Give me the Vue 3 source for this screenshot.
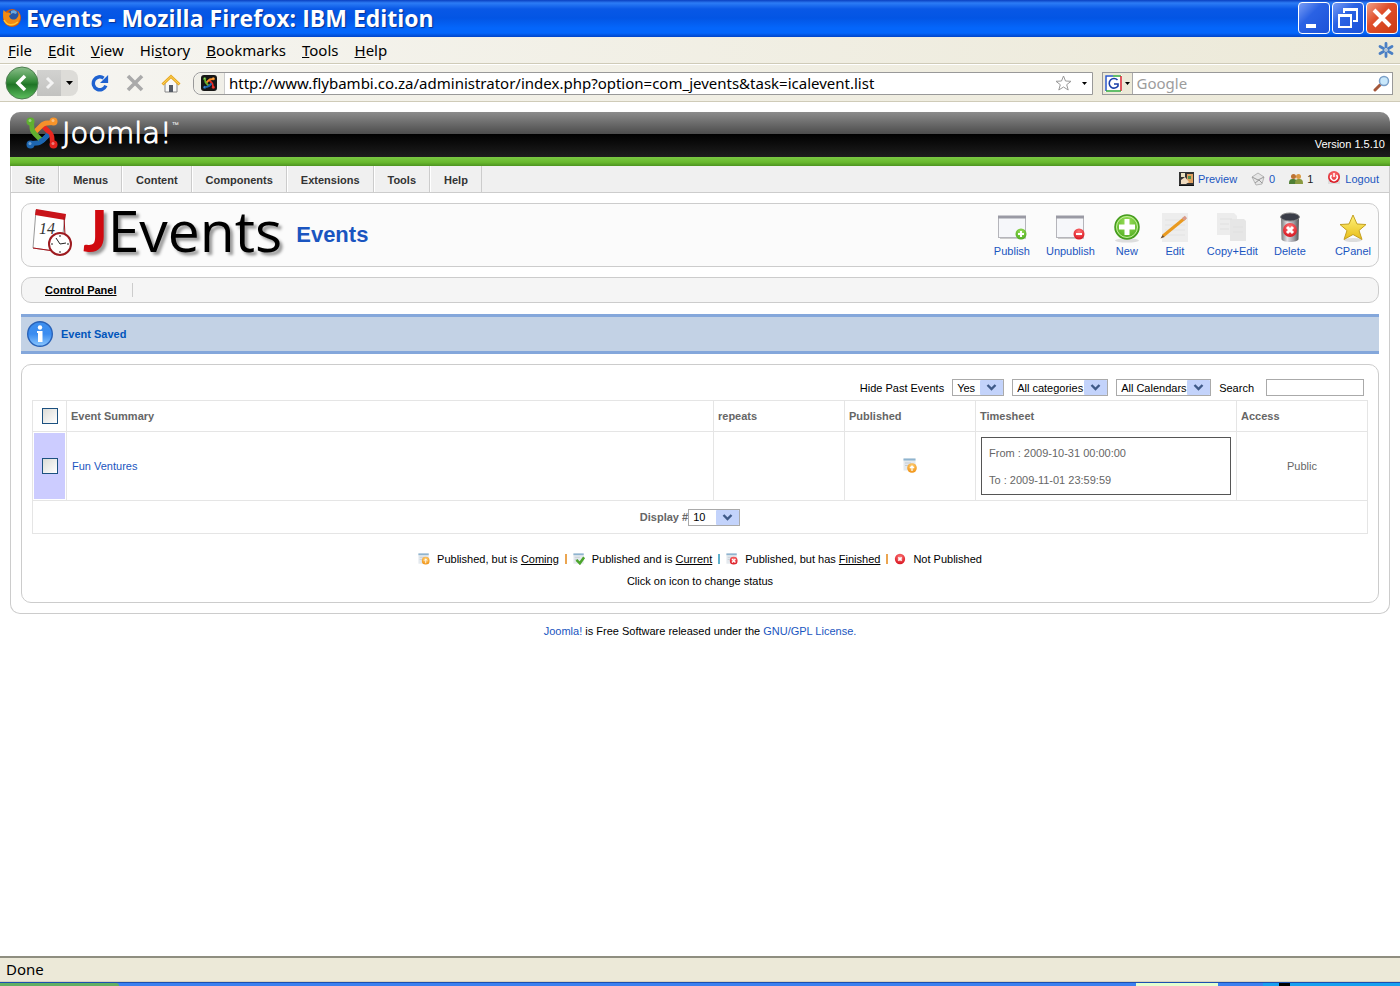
<template>
  <div class="window">
    <svg class="defs" width="0" height="0" aria-hidden="true">
      <defs>
        <radialGradient id="g-green" cx=".5" cy=".3" r=".7"><stop offset="0" stop-color="#9be05a" /><stop offset="1" stop-color="#4fac20" /></radialGradient>
        <radialGradient id="g-red" cx=".5" cy=".3" r=".7"><stop offset="0" stop-color="#f77" /><stop offset="1" stop-color="#d8141f" /></radialGradient>
        <radialGradient id="g-orange" cx=".5" cy=".3" r=".7"><stop offset="0" stop-color="#ffd27a" /><stop offset="1" stop-color="#f09010" /></radialGradient>
        <linearGradient id="g-blue" x2="0" y2="1"><stop offset="0" stop-color="#3d8fee" /><stop offset=".5" stop-color="#3a8cf0" /><stop offset="1" stop-color="#8cc8ff" /></linearGradient>
        <linearGradient id="g-back" x2="0" y2="1"><stop offset="0" stop-color="#8cc08c" /><stop offset=".45" stop-color="#358a3a" /><stop offset=".55" stop-color="#1f7526" /><stop offset="1" stop-color="#5fc060" /></linearGradient>
        <linearGradient id="g-can"><stop offset="0" stop-color="#777" /><stop offset=".35" stop-color="#e4e4e8" /><stop offset=".7" stop-color="#a0a0a6" /><stop offset="1" stop-color="#555" /></linearGradient>
        <linearGradient id="g-star" x2="0" y2="1"><stop offset="0" stop-color="#fff37a" /><stop offset="1" stop-color="#e8bd18" /></linearGradient>
        <symbol id="joomla" viewBox="0 0 32 32">
          <g fill="none" stroke-width="4.8" stroke-linecap="round" stroke-linejoin="round">
            <path d="M5 27c1-1 4-1 6-1 3 0 5-2 6-3l6-6" stroke="#1d66b0" />
            <path d="M27 27c-1-2-1-4-1-6 0-3-2-5-3-6l-5-5" stroke="#e8271f" />
            <path d="M27 5c-1 1-4 1-6 1-3 0-5 2-6 3l-5 5" stroke="#f7902a" />
            <path d="M5 5c1 2 1 4 1 6 0 3 2 5 3 6l6 6" stroke="#62b030" />
            <path d="M15 24l2-1 4-4" stroke="#1d66b0" />
          </g>
          <circle cx="4.500" cy="4.500" r="4" fill="#5fb030" /><circle cx="27.500" cy="4.500" r="4" fill="#f7942a" />
          <circle cx="27.500" cy="27.500" r="4" fill="#e2231d" /><circle cx="4.500" cy="27.500" r="4" fill="#1d66b0" />
          <g fill="#fff" opacity=".4"><circle cx="4" cy="3.500" r="1.500" /><circle cx="27" cy="3.500" r="1.500" /><circle cx="27" cy="26.500" r="1.500" /><circle cx="4" cy="26.500" r="1.500" /></g>
        </symbol>
        <symbol id="chevron" viewBox="0 0 23 15">
          <rect width="23" height="15" rx="1" fill="#c3d3fb" />
          <path d="M7.500 5l4 4 4-4" fill="none" stroke="#3f5a88" stroke-width="2.400" />
        </symbol>
        <symbol id="st-page" viewBox="0 0 14 14">
          <rect x=".5" y=".5" width="12" height="12" fill="#e4e9ee" /><path d="M.5 1.500h12" stroke="#8fb4cf" stroke-width="2" />
          <path d="M2 5h6M2 7.500h4" stroke="#c5ccd3" />
        </symbol>
      </defs>
    </svg>

    <header class="titlebar">
      <svg width="20" height="20" viewBox="0 0 20 20">
        <circle cx="10" cy="10" r="9" fill="#d85a08" />
        <circle cx="11" cy="8" r="6" fill="#2456a4" />
        <path d="M9 3c2-1 4-1 6 1l-1 2-3-1-2 1z" fill="#69a9df" />
        <path d="M1.500 2l3.500 3c2-1 3 0 4 1L7 8l1 2c2 2 5 2 7 0 2-2 2-5 1-7 3 4 3 10-1 13s-10 2-12-2C1 11 .500 6 1.500 2z" fill="#f28a14" />
        <path d="M2 12c3 6 9 6 14 2" fill="none" stroke="#ffc832" stroke-width="1.500" />
      </svg>
      <h1>Events - Mozilla Firefox: IBM Edition</h1>
      <div class="window-controls">
        <button aria-label="Minimize"><svg viewBox="0 0 28 28"><rect x="6" y="20" width="10" height="4" fill="#fff" /></svg></button>
        <button aria-label="Restore"><svg viewBox="0 0 28 28" fill="none" stroke="#fff"><path d="M10 9V5h13v12h-4" stroke-width="2" /><path d="M9 5.500h15" stroke-width="3" /><rect x="5" y="11" width="12" height="12" stroke-width="2" /><path d="M4 11.500h14" stroke-width="3" /></svg></button>
        <button class="close" aria-label="Close"><svg viewBox="0 0 28 28"><path d="M6 6l16 16M22 6L6 22" stroke="#fff" stroke-width="4" /></svg></button>
      </div>
    </header>

    <nav class="menubar">
      <button v-for="m in browserMenu" :key="m.key + m.rest">{{ m.pre }}<u>{{ m.key }}</u>{{ m.rest }}</button>
      <svg class="throbber" width="16" height="16" viewBox="0 0 16 16" stroke="#4a7fc4" stroke-width="2.800" stroke-linecap="round"><path d="M8 1.500v3.500M8 11v3.500M2 4.500l3.500 2M10.500 9.500l3.500 2M2 11.500l3.500-2M10.500 6.500l3.500-2" /><circle cx="8" cy="8" r="1" stroke="none" fill="#9dbbe0" /></svg>
    </nav>

    <div class="navbar">
      <div class="history">
        <button class="back" aria-label="Back"><svg width="34" height="34" viewBox="0 0 34 34"><circle cx="17" cy="17" r="16" fill="url(#g-back)" stroke="#4d7d50" /><path d="M20 10l-7 7 7 7" fill="none" stroke="#fff" stroke-width="3.500" /></svg></button>
        <button class="forward" aria-label="Forward"><svg width="24" height="24" viewBox="0 0 24 24"><path d="M10 7l5 5-5 5" fill="none" stroke="#f4f4f4" stroke-width="3" /></svg></button>
        <button class="recent" aria-label="Recent pages"><svg width="7" height="4" viewBox="0 0 7 4"><path d="M0 0h7L3.500 4z" /></svg></button>
      </div>
      <button aria-label="Reload"><svg width="18" height="18" viewBox="0 0 20 20"><path d="M16.500 13A7.200 7.200 0 1 1 14 4.500" fill="none" stroke="#1f62d0" stroke-width="3.800" /><path d="M19 1v9h-9z" fill="#1f62d0" /></svg></button>
      <button aria-label="Stop"><svg width="18" height="18" viewBox="0 0 18 18"><path d="M2 2l14 14M16 2L2 16" stroke="#aaa" stroke-width="3.600" /></svg></button>
      <button aria-label="Home"><svg width="20" height="19" viewBox="0 0 20 19"><path d="M4 9v9h12V9l-6-6z" fill="#f8f8f8" stroke="#888" /><rect x="8" y="11" width="4" height="7" fill="#555b66" /><path d="M1.500 10.500L10 2.500l8.500 8" fill="none" stroke="#e7a722" stroke-width="3" /><path d="M2 10l8-7.500 8 7.500" fill="none" stroke="#ffd95a" /></svg></button>
      <form class="address" @submit.prevent>
        <span class="favicon"><svg width="16" height="16" viewBox="0 0 16 16"><rect width="16" height="16" rx="3" fill="#161616" /><use href="#joomla" x="2" y="2" width="12" height="12" /></svg></span>
        <input v-model="url" aria-label="Address" />
        <svg width="17" height="16" viewBox="0 0 17 16"><path d="M8.500 1l2 5 5.500.300-4.300 3.400 1.500 5.300-4.700-3-4.700 3 1.500-5.300L1 6.300 6.500 6z" fill="#fff" stroke="#999" /></svg>
        <svg class="drop" width="5" height="3" viewBox="0 0 5 3"><path d="M0 0h5L2.500 3z" /></svg>
      </form>
      <form class="websearch" @submit.prevent>
        <span class="engine">
          <svg width="17" height="17" viewBox="0 0 17 17" fill="none"><rect width="17" height="17" fill="#fff" /><path d="M1 16V1h7" stroke="#2a55c8" stroke-width="1.500" /><path d="M8 1h8" stroke="#2fa838" stroke-width="1.500" /><path d="M16 1v15" stroke="#d8202a" stroke-width="1.500" /><path d="M1 16h15" stroke="#2fa838" stroke-width="1.500" /><path d="M12.500 5a4.800 4.800 0 1 0 .5 6V9H9" stroke="#1a3fa8" stroke-width="1.600" /></svg>
          <svg width="5" height="3" viewBox="0 0 5 3"><path d="M0 0h5L2.500 3z" /></svg>
        </span>
        <input placeholder="Google" aria-label="Web search" />
        <svg width="17" height="17" viewBox="0 0 17 17"><path d="M2 15l5-5" stroke="#a4573a" stroke-width="3" stroke-linecap="round" /><circle cx="11" cy="6" r="4.500" fill="#c9e8fb" stroke="#7a9fc8" stroke-width="1.500" /></svg>
      </form>
    </div>

    <main class="page">
      <div class="admin">
        <div class="brand">
          <div class="logo"><svg width="32" height="32"><use href="#joomla" width="32" height="32" /></svg><span>Joomla!</span><sup>™</sup></div>
          <span class="version">Version 1.5.10</span>
        </div>
        <div class="green"></div>
        <div class="adminmenu">
          <nav><a v-for="item in adminMenu" :key="item" href="#">{{ item }}</a></nav>
          <div class="status">
            <a href="#"><svg width="15" height="14" viewBox="0 0 15 14"><rect width="15" height="14" fill="#333" /><rect x="2" y="1" width="4" height="4" fill="#e8e0c0" /><rect x="8" y="2" width="6" height="9" fill="#e0a060" /><path d="M2 8l4-3 4 5-3 2H2z" fill="#f0dcc0" /><path d="M9 4h3v3H9z" fill="#4f8f50" /><path d="M0 13.500h15" stroke="#111" /></svg>Preview</a>
            <a href="#"><svg width="14" height="14" viewBox="0 0 14 14"><path d="M1 5l6-4 6 4-2 7-6 1z" fill="#e6e6e6" stroke="#b5b5b5" /><path d="M1 5l6 3 6-3M4 11l4-3 3 3" fill="none" stroke="#999" /></svg>0</a>
            <a class="users" href="#"><svg width="14" height="12" viewBox="0 0 14 12"><path d="M0 11c0-4 1-5 4-5s4 1 4 5z" fill="#4f7f35" /><path d="M6 11c0-4 1-5 4-5s4 1 4 5z" fill="#8a9a40" /><circle cx="4.500" cy="3.500" r="2.500" fill="#bd7434" /><circle cx="9.500" cy="3.500" r="2.500" fill="#dc9a44" /></svg>1</a>
            <a href="#"><svg width="14" height="16" viewBox="0 0 14 16"><path d="M1 2h12v11H1z" fill="#ddd" /><circle cx="7" cy="6" r="6" fill="url(#g-red)" /><path d="M4.500 4a3.300 3.300 0 1 0 5 0M7 2v4" fill="none" stroke="#fff" stroke-width="1.500" /></svg>Logout</a>
          </div>
        </div>

        <div class="body">
          <section class="panel toolbar">
            <div class="jevents">
              <svg width="42" height="48" viewBox="0 0 42 48">
                <path d="M4 1l29 5-4 37-28-4z" fill="#fff" stroke="#999" /><path d="M4 0l30 5-1 6L3 6z" fill="#c9141a" />
                <path d="M1 39l28 4" stroke="#b01018" /><path d="M32 8l1 18" stroke="#a01018" />
                <circle cx="28" cy="35" r="11" fill="#fff" stroke="#9d1b20" stroke-width="2" />
                <path d="M28 35l-4-6M28 35l6-1M28 26v2M28 42v2M19 35h2M35 35h2" stroke="#222" fill="none" />
                <text x="7" y="25" class="cal-day">14</text>
              </svg>
              <span class="wordmark"><b>J</b>Events</span>
            </div>
            <h2>Events</h2>
            <div class="tools">
              <a v-for="tool in tools" :key="tool" href="#" :class="{ apart: tool === 'CPanel' }">
                <svg width="32" height="32" viewBox="0 0 32 32">
                  <template v-if="tool === 'Publish' || tool === 'Unpublish'">
                    <rect x="2.500" y="4.500" width="27" height="21" fill="#f6f7fa" stroke="#b5b5bb" /><path d="M2 5h28" stroke="#9a9aa4" stroke-width="3" /><path d="M4 26.500h26" stroke="#ccc" />
                    <circle cx="25" cy="22" r="5.500" :fill="tool === 'Publish' ? 'url(#g-green)' : 'url(#g-red)'" />
                    <path :d="tool === 'Publish' ? 'M22 22h6M25 19v6' : 'M22 22h6'" stroke="#fff" stroke-width="2" />
                  </template>
                  <template v-else-if="tool === 'New'">
                    <ellipse cx="16" cy="28.500" rx="12" ry="2" fill="#ddd" /><circle cx="16" cy="15" r="12" fill="url(#g-green)" stroke="#459b1e" stroke-width="1.500" />
                    <circle cx="16" cy="15" r="10.500" fill="none" stroke="#c3f09a" /><path d="M16 7v16M8 15h16" stroke="#fff" stroke-width="5" />
                  </template>
                  <template v-else-if="tool === 'Edit'">
                    <rect x="3" y="1" width="26" height="29" fill="#ededed" /><path d="M6 8h20M6 13h20M6 18h20M6 23h20" stroke="#e3e3e3" />
                    <path d="M4 24L26 6" stroke="#e99a20" stroke-width="3" /><path d="M24 7.500l3-2.500" stroke="#d99a8a" stroke-width="3.500" /><path d="M1.500 26.500l4-1.500-2-2z" fill="#6b4a28" />
                  </template>
                  <template v-else-if="tool === 'Copy+Edit'">
                    <path d="M1 1h17l3 3v19H1z" fill="#ececec" /><path d="M14 7h14l2 2v20H14z" fill="#e6e6e6" /><path d="M4 7h12M4 12h9M4 17h9M17 15h10M17 20h10" stroke="#e0e0e0" />
                  </template>
                  <template v-else-if="tool === 'Delete'">
                    <path d="M7 5l.500 22c0 4 17 4 17 0L25 5z" fill="url(#g-can)" /><ellipse cx="16" cy="5" rx="9.500" ry="4" fill="#3a3d48" stroke="#888" />
                    <circle cx="16" cy="18" r="7" fill="url(#g-red)" /><path d="M13 15l6 6M19 15l-6 6" stroke="#fff" stroke-width="3" />
                  </template>
                  <template v-else>
                    <ellipse cx="16" cy="28" rx="9" ry="2" fill="#ddd" /><path d="M16 3l4 9 9 .500-7 6 3 9-9-5-9 5 3-9-7-6 9-.500z" fill="url(#g-star)" stroke="#c4a021" />
                  </template>
                </svg>
                {{ tool }}
              </a>
            </div>
          </section>

          <nav class="panel submenu"><a href="#">Control Panel</a></nav>

          <div class="message">
            <svg width="26" height="26" viewBox="0 0 26 26"><circle cx="13" cy="13" r="12.300" fill="url(#g-blue)" stroke="#2862b8" stroke-width="1.400" /><circle cx="13" cy="6.500" r="2.200" fill="#fff" /><path d="M10 10h5.500v11H11v-9h-1z" fill="#fff" /></svg>
            Event Saved
          </div>

          <section class="panel events">
            <form class="filters" @submit.prevent>
              <template v-for="f in filters" :key="f.value">
                <label v-if="f.label" :for="f.id">{{ f.label }}</label>
                <span class="select" :class="f.id"><select :id="f.id" :aria-label="f.id"><option>{{ f.value }}</option></select><svg width="23" height="15"><use href="#chevron" /></svg></span>
              </template>
              <label for="search">Search</label>
              <input id="search" type="text" />
            </form>

            <table>
              <colgroup>
                <col class="c-check" /><col /><col class="c-small" /><col class="c-small" /><col class="c-time" /><col class="c-small" />
              </colgroup>
              <thead>
                <tr>
                  <th class="check"><input type="checkbox" aria-label="Select all" /></th>
                  <th v-for="h in headings" :key="h">{{ h }}</th>
                </tr>
              </thead>
              <tbody>
                <tr v-for="ev in events" :key="ev.title">
                  <td class="check marked"><div><input type="checkbox" :aria-label="ev.title" /></div></td>
                  <td class="name"><a href="#">{{ ev.title }}</a></td>
                  <td></td>
                  <td class="center"><svg width="14" height="16" viewBox="0 0 14 16"><use href="#st-page" width="14" height="14" /><circle cx="9" cy="10" r="4.800" fill="url(#g-orange)" /><path d="M9 13V8M7 10l2-2 2 2" fill="none" stroke="#fff" stroke-width="1.200" /></svg></td>
                  <td class="sheet"><div><p>From : {{ ev.from }}</p><p>To : {{ ev.to }}</p></div></td>
                  <td class="center">{{ ev.access }}</td>
                </tr>
              </tbody>
              <tfoot>
                <tr>
                  <td colspan="6"><div class="pager"><label for="limit">Display #</label><span class="select limit"><select id="limit"><option>10</option></select><svg width="23" height="15"><use href="#chevron" /></svg></span></div></td>
                </tr>
              </tfoot>
            </table>

            <div class="legend">
              <template v-for="(l, i) in legend" :key="l.kind">
                <span v-if="i" class="bar" :class="{ alt: i === 2 }"></span>
                <svg width="12" height="12" viewBox="0 0 14 14">
                  <use v-if="l.kind !== 'off'" href="#st-page" width="14" height="14" />
                  <circle v-if="l.kind === 'coming'" cx="9" cy="9" r="4.500" fill="url(#g-orange)" />
                  <path v-if="l.kind === 'coming'" d="M9 12V7M7 9l2-2 2 2" stroke="#fff" fill="none" />
                  <path v-if="l.kind === 'current'" d="M4 8l4 4 5-7" fill="none" stroke="#4ca52c" stroke-width="3" />
                  <circle v-if="l.kind === 'finished'" cx="9" cy="9" r="4.500" fill="url(#g-red)" />
                  <path v-if="l.kind === 'finished'" d="M7 7l4 4M11 7l-4 4" stroke="#fff" stroke-width="1.500" />
                  <circle v-if="l.kind === 'off'" cx="7" cy="7" r="6" fill="url(#g-red)" />
                  <path v-if="l.kind === 'off'" d="M5 5l4 4M9 5L5 9" stroke="#fff" stroke-width="2" />
                </svg>
                <span>{{ l.text }}<u v-if="l.state">{{ l.state }}</u></span>
              </template>
            </div>
            <p class="hint">Click on icon to change status</p>
          </section>
        </div>
      </div>
      <p class="license"><a href="#">Joomla!</a> is Free Software released under the <a href="#">GNU/GPL License.</a></p>
    </main>

    <footer class="statusbar">Done</footer>
    <div class="taskbar"><span class="start"></span><span class="lang"></span><span class="tray"><i></i></span></div>
  </div>
</template>

<script setup>
import { ref } from 'vue'

const url = ref('http://www.flybambi.co.za/administrator/index.php?option=com_jevents&task=icalevent.list')

const browserMenu = [
  { pre: '', key: 'F', rest: 'ile' },
  { pre: '', key: 'E', rest: 'dit' },
  { pre: '', key: 'V', rest: 'iew' },
  { pre: 'Hi', key: 's', rest: 'tory' },
  { pre: '', key: 'B', rest: 'ookmarks' },
  { pre: '', key: 'T', rest: 'ools' },
  { pre: '', key: 'H', rest: 'elp' }
]

const adminMenu = ['Site', 'Menus', 'Content', 'Components', 'Extensions', 'Tools', 'Help']
const tools = ['Publish', 'Unpublish', 'New', 'Edit', 'Copy+Edit', 'Delete', 'CPanel']

const filters = [
  { id: 'past', label: 'Hide Past Events', value: 'Yes' },
  { id: 'categories', value: 'All categories' },
  { id: 'calendars', value: 'All Calendars' }
]

const headings = ['Event Summary', 'repeats', 'Published', 'Timesheet', 'Access']
const events = [
  { title: 'Fun Ventures', from: '2009-10-31 00:00:00', to: '2009-11-01 23:59:59', access: 'Public' }
]

const legend = [
  { kind: 'coming', text: 'Published, but is ', state: 'Coming' },
  { kind: 'current', text: 'Published and is ', state: 'Current' },
  { kind: 'finished', text: 'Published, but has ', state: 'Finished' },
  { kind: 'off', text: 'Not Published' }
]
</script>

<style>
body {
  margin: 0;
}
</style>

<style scoped>
* {
  box-sizing: border-box;
}

.window {
  min-height: 100vh;
  display: flex;
  flex-direction: column;
  background: #fff;
  color: #000;
  font: 11px/14px "Liberation Sans", Arial, sans-serif;
}

.defs {
  position: absolute;
}

svg {
  display: block;
  flex: none;
}

a {
  color: #1a55c0;
  text-decoration: none;
}

p {
  margin: 0;
}

button {
  border: 0;
  padding: 0;
  background: none;
  color: inherit;
  font: inherit;
}

input {
  min-width: 0;
  border: 0;
  padding: 0;
  outline: 0;
  font: inherit;
}

/* browser chrome */
.titlebar {
  height: 37px;
  display: flex;
  align-items: center;
  gap: 4px;
  padding: 0 2px 2px;
  background: linear-gradient(#0a3fc0 0, #2c7cf5 3px, #0958e6 9px, #0355e4 18px, #0466fb 28px, #0466fb 33px, #0144c8);
}

.titlebar h1 {
  margin: 0;
  color: #fff;
  font: bold 23px/30px "Open Sans", "Noto Sans", sans-serif;
  text-shadow: 1px 1px 1px #0a2f90;
}

.window-controls {
  margin-left: auto;
  display: flex;
  gap: 2px;
}

.window-controls button {
  width: 32px;
  height: 32px;
  border: 1px solid #fff;
  border-radius: 4px;
  padding: 1px;
  background: linear-gradient(135deg, #7a9df5, #2a62e4 40%, #1d52d8);
}

.window-controls .close {
  background: linear-gradient(135deg, #f0a088, #e0502c 40%, #cc3a14);
}

.menubar {
  height: 27px;
  display: flex;
  align-items: center;
  gap: 16px;
  padding: 0 6px 0 8px;
  border-bottom: 1px solid #cfcbb8;
  background: linear-gradient(90deg, #f6f5f1, #ece9d8);
  font: 15px/24px "Noto Sans", sans-serif;
}

.throbber {
  margin-left: auto;
}

.navbar {
  height: 38px;
  display: flex;
  align-items: center;
  gap: 17px;
  padding: 0 7px 0 5px;
  border-top: 1px solid #fff;
  border-bottom: 1px solid #cfcbb8;
  background: linear-gradient(90deg, #f6f5f1, #ece9d8);
}

.history {
  display: flex;
  align-items: center;
  margin-right: -4px;
}

.back {
  z-index: 1;
}

.forward {
  height: 26px;
  margin-left: -2px;
  background: linear-gradient(#d2d2d0, #c2c2c0);
}

.recent {
  width: 17px;
  height: 26px;
  display: grid;
  place-items: center;
  border-radius: 0 8px 8px 0;
  background: #dddcd8;
}

.address,
.websearch {
  height: 23px;
  display: flex;
  align-items: center;
  border: 1px solid #999;
  background: #fff;
  font: 15px/21px "Noto Sans", sans-serif;
}

.address {
  flex: 1;
  gap: 10px;
  margin: 0 -8px 0 -5px;
  padding-right: 5px;
  border-radius: 8px 0 0 8px;
}

.address input {
  flex: 1;
  margin-left: -6px;
}

.favicon {
  height: 100%;
  display: flex;
  align-items: center;
  padding: 0 7px;
  border-right: 1px solid #ccc;
  border-radius: 8px 0 0 8px;
  background: #f0efe8;
}

.websearch {
  width: 21%;
  padding-right: 2px;
}

.websearch input {
  flex: 1;
  padding-left: 4px;
}

.websearch input::placeholder {
  color: #9c9c9c;
  opacity: 1;
}

.engine {
  height: 100%;
  display: flex;
  align-items: center;
  gap: 3px;
  padding: 0 2px;
  border-right: 1px solid #aaa;
  background: #ece9d8;
}

.statusbar {
  height: 26px;
  padding: 0 6px;
  border-top: 2px solid #8f8e80;
  border-bottom: 1px solid #d8d2bd;
  background: #ece9d8;
  font: 15px/22px "Noto Sans", sans-serif;
}

.taskbar {
  height: 4px;
  display: flex;
  justify-content: flex-end;
  border-top: 1px solid #1c4fb0;
  background: #3a80f0;
}

.start {
  width: 119px;
  margin-right: auto;
  border-radius: 0 4px 0 0;
  background: #62ae62;
}

.lang {
  width: 82px;
  margin-right: 45px;
  background: #e4ffd0;
}

.tray {
  width: 137px;
  padding-left: 16px;
  background: #16a0f0;
}

.tray i {
  display: block;
  width: 11px;
  height: 3px;
  background: #000;
}

/* administrator page */
.page {
  flex: 1;
  padding: 10px 10px 0;
}

.admin {
  border: 1px solid #ccc;
  border-top: 0;
  border-radius: 10px;
}

.brand {
  height: 45px;
  display: flex;
  justify-content: space-between;
  margin: 0 -1px;
  padding: 0 5px 0 16px;
  border-radius: 10px 10px 0 0;
  background: linear-gradient(#8c8c8c, #4c4c4c 22px, #000 22px, #1e1e1e);
  color: #fff;
}

.logo {
  display: flex;
  align-items: center;
  gap: 4px;
  font: 200 29px/40px "DejaVu Sans", sans-serif;
}

.logo svg {
  align-self: flex-start;
  margin-top: 5px;
}

.logo span {
  padding-bottom: 3px;
  -webkit-text-stroke: 1px #fff;
}

.logo sup {
  align-self: flex-start;
  margin: 6px 0 0 -4px;
  font-size: 7px;
  line-height: 14px;
}

.version {
  align-self: flex-end;
  padding-bottom: 6px;
}

.green {
  height: 9px;
  margin: 0 -1px;
  background: linear-gradient(#7ac943, #68b82e 60%, #4d9420);
}

.adminmenu {
  height: 27px;
  display: flex;
  justify-content: space-between;
  border-bottom: 1px solid #ccc;
  background: #f0f0f0;
}

.adminmenu nav {
  display: flex;
}

.adminmenu nav a {
  padding: 0 13px;
  border-right: 1px solid #ccc;
  border-left: 1px solid #fff;
  color: #333;
  font-weight: bold;
  line-height: 28px;
}

.status {
  display: flex;
  align-items: center;
  gap: 14px;
  padding-right: 10px;
}

.status a {
  display: flex;
  align-items: center;
  gap: 4px;
}

.status .users {
  color: #222;
}

.body {
  display: flex;
  flex-direction: column;
  gap: 10px;
  padding: 10px;
}

.panel {
  border: 1px solid #ccc;
  border-radius: 10px;
}

.toolbar {
  height: 64px;
  display: flex;
  align-items: center;
  padding: 0 7px 0 10px;
  background: #fbfbfb;
}

.jevents {
  display: flex;
  align-items: center;
  gap: 9px;
  padding-bottom: 4px;
}

.cal-day {
  fill: #333;
  font: italic 16px "Liberation Serif", serif;
}

.wordmark {
  padding-bottom: 6px;
  font: 500 57px/58px "Open Sans", "Noto Sans", sans-serif;
  text-shadow: 3px 3px 3px #999;
}

.wordmark b {
  color: #d00a10;
  font-family: Lato, sans-serif;
  font-weight: 900;
}

.toolbar h2 {
  margin: 0 0 0 14px;
  color: #1a55c0;
  font-size: 22px;
  line-height: 28px;
}

.tools {
  display: flex;
  gap: 16px;
  margin-left: auto;
}

.tools a {
  min-width: 32px;
  display: flex;
  flex-direction: column;
  align-items: center;
}

.tools .apart {
  margin-left: 13px;
}

.submenu {
  height: 26px;
  display: flex;
  align-items: center;
  padding-left: 23px;
  background: #f5f5f5;
}

.submenu a {
  padding-right: 15px;
  border-right: 1px solid #ccc;
  color: #000;
  font-weight: bold;
  text-decoration: underline;
}

.message {
  height: 40px;
  display: flex;
  align-items: center;
  gap: 8px;
  padding-left: 6px;
  border-top: 3px solid #84a7db;
  border-bottom: 3px solid #84a7db;
  margin-top: 1px;
  background: #c3d2e5;
  color: #0055bb;
  font-weight: bold;
}

.events {
  padding: 14px 10px;
}

.filters {
  display: flex;
  align-items: center;
  justify-content: flex-end;
  gap: 8px;
  padding: 0 4px 4px 0;
}

.filters > input {
  width: 98px;
  height: 17px;
  margin-left: 4px;
  border: 1px solid #aaa;
}

.select {
  height: 17px;
  display: inline-grid;
  align-items: center;
  border: 1px solid #aaa;
  background: #fff;
}

.select select,
.select svg {
  grid-area: 1 / 1;
}

.select select {
  width: 100%;
  height: 15px;
  appearance: none;
  border: 0;
  padding: 0 0 0 4px;
  background: none;
  color: #000;
  font: inherit;
}

.select svg {
  justify-self: end;
  pointer-events: none;
}

.past,
.limit {
  width: 52px;
}

.categories {
  width: 96px;
}

.calendars {
  width: 95px;
}

table {
  width: 100%;
  table-layout: fixed;
  border-collapse: collapse;
  color: #666;
}

.c-check {
  width: 34px;
}

.c-small {
  width: 131px;
}

.c-time {
  width: 261px;
}

th,
td {
  border: 1px solid #e5e5e5;
  padding: 0 4px;
}

th {
  height: 31px;
  text-align: left;
}

td {
  height: 33px;
}

.check {
  padding: 1px;
  text-align: center;
}

.marked div {
  height: 66px;
  display: grid;
  place-items: center;
  background: #ccccff;
}

input[type="checkbox"] {
  width: 16px;
  height: 16px;
  display: block;
  margin: 0 auto;
  appearance: none;
  border: 1px solid #1c5180;
  background: linear-gradient(135deg, #dcdcd7, #fff);
}

.name {
  padding-left: 5px;
}

.center {
  text-align: center;
}

.center svg {
  display: inline-block;
  vertical-align: middle;
}

.sheet div {
  display: grid;
  gap: 13px;
  margin: 0 1px;
  border: 1px solid #555;
  padding: 8px 7px 7px;
}

.pager {
  display: flex;
  align-items: center;
  justify-content: center;
  padding-right: 20px;
  font-weight: bold;
}

.pager select {
  font-weight: normal;
}

.legend {
  display: flex;
  align-items: center;
  justify-content: center;
  gap: 7px;
  margin-top: 18px;
}

.legend span {
  white-space: pre;
}

.legend .bar {
  width: 2px;
  height: 10px;
  margin: 0 -1px;
  background: #eba550;
}

.legend .alt {
  background: #5fb0cc;
}

.hint {
  margin-top: 8px;
  text-align: center;
}

.license {
  margin-top: 10px;
  text-align: center;
}
</style>
